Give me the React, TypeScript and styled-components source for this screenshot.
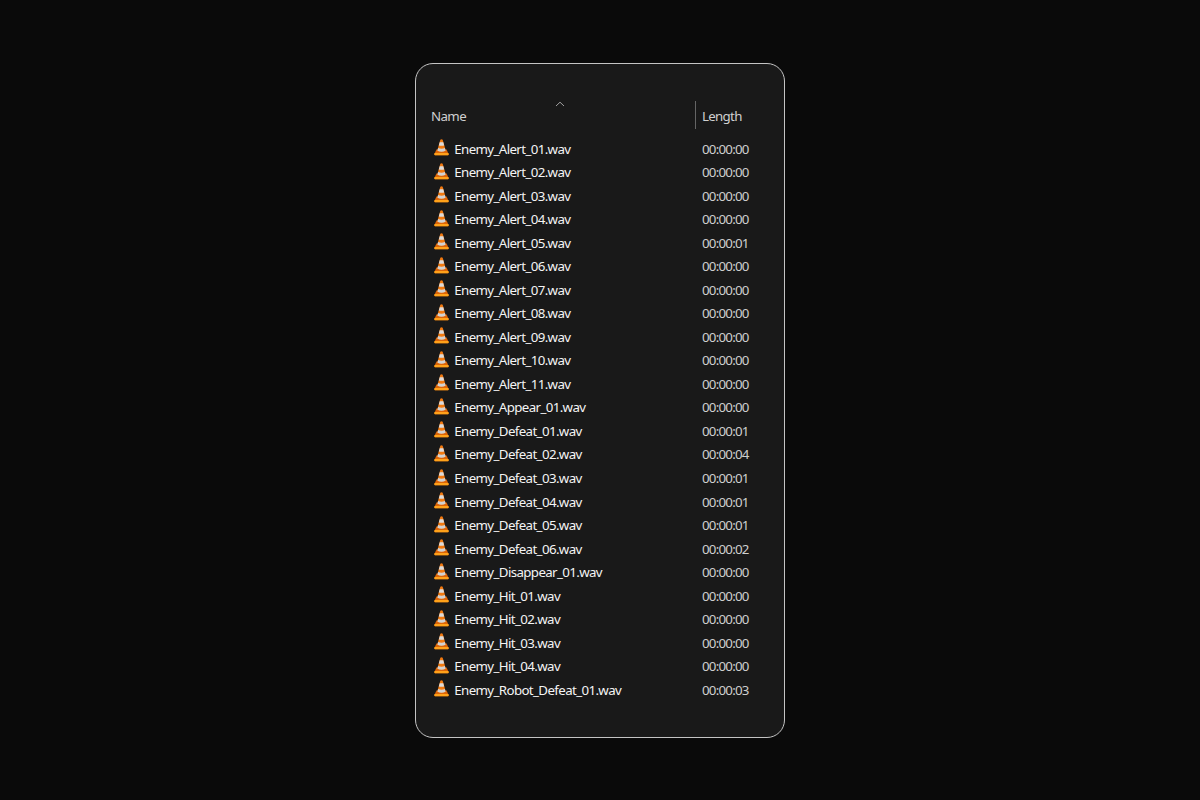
import styled, { createGlobalStyle } from 'styled-components';

type SoundFile = {
  name: string,
  length: string
};

const files: SoundFile[] = [
  { name: 'Enemy_Alert_01.wav', length: '00:00:00' },
  { name: 'Enemy_Alert_02.wav', length: '00:00:00' },
  { name: 'Enemy_Alert_03.wav', length: '00:00:00' },
  { name: 'Enemy_Alert_04.wav', length: '00:00:00' },
  { name: 'Enemy_Alert_05.wav', length: '00:00:01' },
  { name: 'Enemy_Alert_06.wav', length: '00:00:00' },
  { name: 'Enemy_Alert_07.wav', length: '00:00:00' },
  { name: 'Enemy_Alert_08.wav', length: '00:00:00' },
  { name: 'Enemy_Alert_09.wav', length: '00:00:00' },
  { name: 'Enemy_Alert_10.wav', length: '00:00:00' },
  { name: 'Enemy_Alert_11.wav', length: '00:00:00' },
  { name: 'Enemy_Appear_01.wav', length: '00:00:00' },
  { name: 'Enemy_Defeat_01.wav', length: '00:00:01' },
  { name: 'Enemy_Defeat_02.wav', length: '00:00:04' },
  { name: 'Enemy_Defeat_03.wav', length: '00:00:01' },
  { name: 'Enemy_Defeat_04.wav', length: '00:00:01' },
  { name: 'Enemy_Defeat_05.wav', length: '00:00:01' },
  { name: 'Enemy_Defeat_06.wav', length: '00:00:02' },
  { name: 'Enemy_Disappear_01.wav', length: '00:00:00' },
  { name: 'Enemy_Hit_01.wav', length: '00:00:00' },
  { name: 'Enemy_Hit_02.wav', length: '00:00:00' },
  { name: 'Enemy_Hit_03.wav', length: '00:00:00' },
  { name: 'Enemy_Hit_04.wav', length: '00:00:00' },
  { name: 'Enemy_Robot_Defeat_01.wav', length: '00:00:03' },
];

const ConeIcon = () => (
  <Cone viewBox="0 0 15 17">
    <path d="M2.4 10.6h10.2l2 4.4q.3 1.3-.7 1.3H1.1q-1 0-.7-1.3z" fill="#dd6508" />
    <path d="M.5 14h14l.2 1.5q0 .8-.8.8H1.1q-.8 0-.8-.8z" fill="#ffa21a" />
    <path d="M6.3.8q1.2-.9 2.4 0l3 10.6q-4.2 2.6-8.4 0z" fill="#f27a10" />
    <path d="M5.7 3.2h3.6l.9 3.2q-2.7.8-5.4 0z" fill="#dcdcdc" />
    <path d="M4.1 9.1q3.4 1.1 6.8 0l.7 2.6q-4.1 2-8.2 0z" fill="#d2d2d2" />
  </Cone>
);

const App: React.FC = () => {
  return (
    <>
      <GlobalStyle />
      <Page>
        <Panel>
          <Header>
            <NameHeading>
              Name
              <SortArrow viewBox="0 0 10 6">
                <path d="M1 5l4-3.8L9 5" fill="none" stroke="#a0a0a0" strokeWidth="1" />
              </SortArrow>
            </NameHeading>
            <LengthHeading>Length</LengthHeading>
          </Header>
          <List>
            {files.map((file) => (
              <Row key={file.name}>
                <ConeIcon />
                <FileName>{file.name}</FileName>
                <Duration>{file.length}</Duration>
              </Row>
            ))}
          </List>
        </Panel>
      </Page>
    </>
  );
};

export default App;

const GlobalStyle = createGlobalStyle`
  body {
    margin: 0;
    background: #0a0a0a;
    font-family: 'Noto Sans', 'Open Sans', sans-serif;
  }
`;

const Page = styled.main`
  display: flex;
  justify-content: center;
  height: 800px;
  padding-top: 63px;
  box-sizing: border-box;
`;

const Panel = styled.section`
  width: 370px;
  height: 675.4px;
  box-sizing: border-box;
  padding: 37px 14px 0 15px;
  border: 1px solid #c4c4c4;
  border-radius: 18px;
  background: #191919;
`;

const Header = styled.div`
  display: flex;
  height: 28px;
  font-size: 13.3px;
  line-height: 30px;
  color: #d0d0d0;
`;

const NameHeading = styled.div`
  position: relative;
  width: 264px;
  letter-spacing: -0.6px;
`;

const SortArrow = styled.svg`
  position: absolute;
  left: 124px;
  top: 0;
  width: 10px;
  height: 6px;
`;

const LengthHeading = styled.div`
  padding-left: 6px;
  border-left: 1px solid #656565;
  letter-spacing: -0.7px;
`;

const List = styled.div`
  padding-top: 8.3px;
`;

const Row = styled.div`
  display: flex;
  align-items: center;
  height: 23.54px;
  padding-left: 3px;
  font-size: 13.3px;
  line-height: 23px;
  white-space: nowrap;
`;

const Cone = styled.svg`
  flex: none;
  width: 15px;
  height: 17px;
  margin: 0 5.3px 3px 0;
`;

const FileName = styled.span`
  width: 247.7px;
  letter-spacing: -0.62px;
  color: #f4f4f4;
`;

const Duration = styled.span`
  letter-spacing: -0.76px;
  color: #cfcfcf;
`;
